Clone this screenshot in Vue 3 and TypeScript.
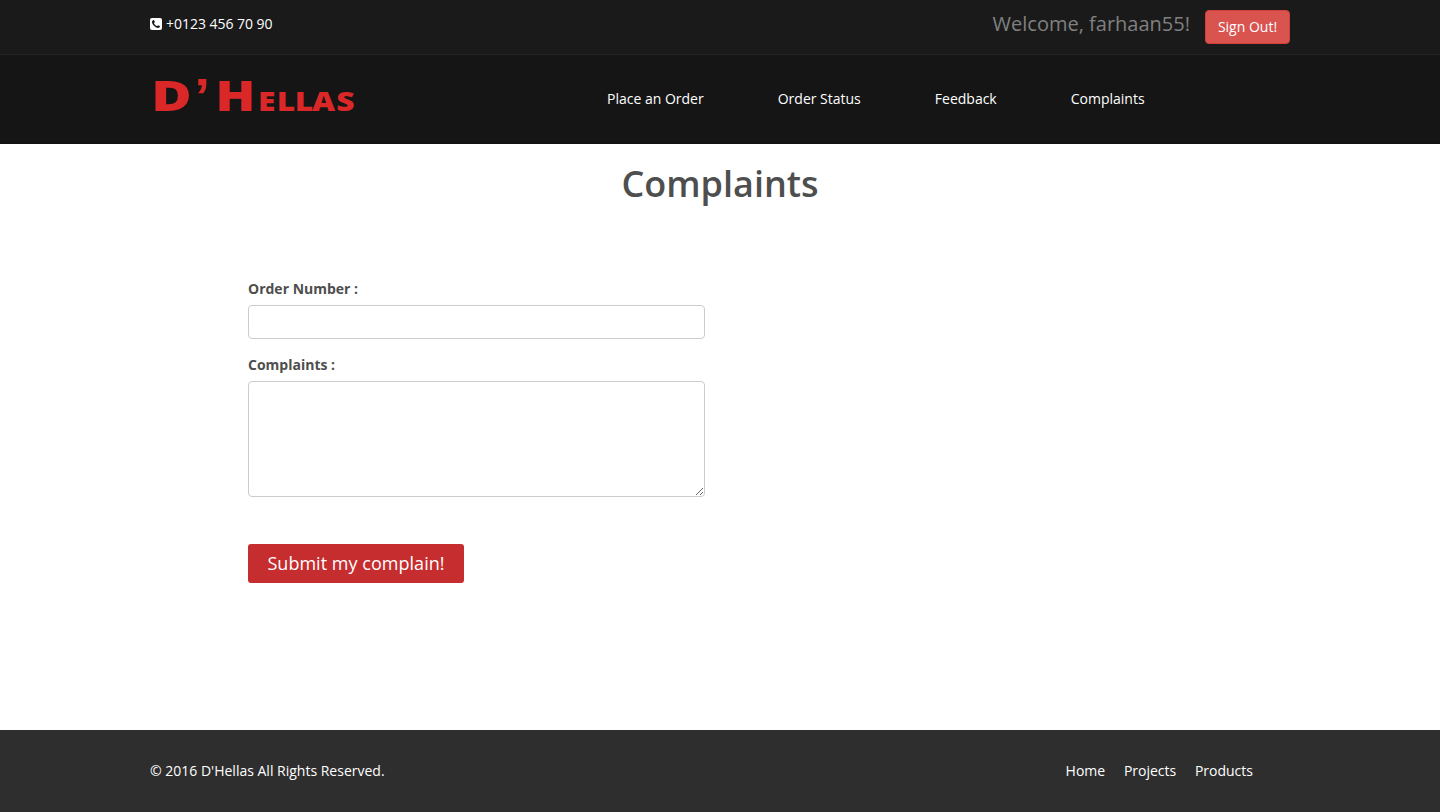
<script setup lang="ts">
import { ref } from 'vue'

interface NavItem {
  label: string
  href: string
}

const navItems: NavItem[] = [
  { label: 'Place an Order', href: '#order' },
  { label: 'Order Status', href: '#status' },
  { label: 'Feedback', href: '#feedback' },
  { label: 'Complaints', href: '#complaints' },
]

const footerItems: NavItem[] = [
  { label: 'Home', href: '#home' },
  { label: 'Projects', href: '#projects' },
  { label: 'Products', href: '#products' },
]

const orderNumber = ref<string>('')
const complaint = ref<string>('')
</script>

<template>
  <div class="page">
    <header>
      <div class="top-bar">
        <div class="container top-inner">
          <p class="phone">
            <svg class="phone-icon" viewBox="0 0 12 12" aria-hidden="true">
              <rect width="12" height="12" rx="2" fill="#fff" />
              <path
                d="M3.600 2C2.700 2.300 2 2.900 2 4c0 1 .9 2.900 2.200 4.100S7 10 8 10c1.100 0 1.900-.8 2-1.700 0-.3-1.600-1.100-1.900-1.100-.4 0-.8.9-1.200.9-.6 0-2.900-2.300-2.900-2.900 0-.4.9-.8.9-1.200C4.900 3.700 4.100 2 3.600 2z"
                fill="#1a1a1a"
              />
            </svg>
            <span>+0123 456 70 90</span>
          </p>
          <div class="account">
            <span class="welcome">Welcome, farhaan55!</span>
            <button type="button" class="sign-out">Sign Out!</button>
          </div>
        </div>
      </div>
      <div class="nav-bar">
        <div class="container nav-inner">
          <a href="#home" class="brand">
            <svg width="215" height="76" viewBox="0 0 215 76" class="logo">
              <text x="1.200" y="53" font-size="43" textLength="40.500" lengthAdjust="spacingAndGlyphs">D</text>
              <text x="44.300" y="55.500" font-size="50" textLength="16" lengthAdjust="spacingAndGlyphs" class="mark">’</text>
              <text x="65.200" y="53" font-size="43" textLength="40" lengthAdjust="spacingAndGlyphs">H</text>
              <text transform="scale(1.2 1)" x="90 105.600 120.600 135 155.300" y="53" font-size="26.500">ELLAS</text>
            </svg>
          </a>
          <nav class="main-nav">
            <a v-for="item in navItems" :key="item.label" :href="item.href">{{ item.label }}</a>
          </nav>
        </div>
      </div>
    </header>

    <main>
      <h1>Complaints</h1>
      <form @submit.prevent>
        <label for="order-number">Order Number :</label>
        <input id="order-number" v-model="orderNumber" type="text" />
        <label for="complaint">Complaints :</label>
        <textarea id="complaint" v-model="complaint"></textarea>
        <button type="submit" class="submit">Submit my complain!</button>
      </form>
    </main>

    <footer>
      <div class="container footer-inner">
        <span class="copyright">© 2016 D'Hellas All Rights Reserved.</span>
        <nav class="footer-nav">
          <a v-for="item in footerItems" :key="item.label" :href="item.href">{{ item.label }}</a>
        </nav>
      </div>
    </footer>
  </div>
</template>

<style>
body {
  margin: 0;
  background: #fff;
}
</style>

<style scoped>
* {
  box-sizing: border-box;
}
.page {
  display: flex;
  flex-direction: column;
  height: 812px;
  font-family: 'Open Sans', sans-serif;
  font-size: 14px;
  line-height: 20px;
  color: #4e4e4e;
}
a {
  color: #fff;
  text-decoration: none;
}
.container {
  display: flex;
  width: 1140px;
  margin: 0 auto;
}
.top-bar {
  height: 55px;
  background: #1a1a1a;
  border-bottom: 1px solid #222;
}
.top-inner {
  justify-content: space-between;
  align-items: flex-start;
}
.phone {
  display: flex;
  align-items: center;
  gap: 4px;
  margin: 14px 0 0;
  color: #fff;
  letter-spacing: -0.03px;
}
.phone-icon {
  width: 12px;
  height: 12px;
}
.account {
  display: flex;
  gap: 15px;
  padding-top: 10px;
}
.welcome {
  font-size: 20px;
  line-height: 28px;
  color: #808080;
}
.sign-out {
  width: 85px;
  height: 34px;
  padding: 0;
  border: 1px solid #d43f3a;
  border-radius: 4px;
  background: #d9534f;
  color: #fff;
  font: inherit;
}
.nav-bar {
  height: 89px;
  background: #151515;
  border-bottom: 2px solid #121212;
}
.nav-inner {
  align-items: flex-start;
}
.brand {
  display: block;
  width: 457px;
  padding-top: 3px;
}
.logo {
  display: block;
  fill: #da2727;
  font-family: 'Open Sans', sans-serif;
  font-weight: 800;
}
.mark {
  font-family: 'Liberation Sans', sans-serif;
  font-weight: 700;
}
.main-nav {
  display: flex;
  gap: 74px;
  padding-top: 34px;
}
main {
  flex: 1;
  padding-top: 20px;
}
h1 {
  margin: 0;
  text-align: center;
  font-size: 36px;
  line-height: 40px;
  font-weight: 600;
}
form {
  display: flex;
  flex-direction: column;
  align-items: flex-start;
  width: 457px;
  margin: 75px 0 0 248px;
}
label {
  margin-bottom: 6px;
  font-weight: 700;
}
input,
textarea {
  display: block;
  width: 457px;
  padding: 6px 12px;
  border: 1px solid #ccc;
  border-radius: 4px;
  background: #fff;
  font: inherit;
}
input {
  height: 34px;
  margin-bottom: 16px;
}
textarea {
  height: 116px;
  margin-bottom: 47px;
}
.submit {
  width: 216px;
  height: 39px;
  padding: 0 0 2px;
  border: 0;
  border-radius: 3px;
  background: #c52d2f;
  color: #fff;
  font-family: inherit;
  font-size: 18px;
  line-height: 24px;
  letter-spacing: 0.03px;
}
footer {
  height: 82px;
  background: #2e2e2e;
  color: #fff;
}
.footer-inner {
  justify-content: space-between;
  padding-top: 31px;
  padding-right: 37px;
}
.footer-nav {
  display: flex;
  gap: 18.7px;
}
</style>
